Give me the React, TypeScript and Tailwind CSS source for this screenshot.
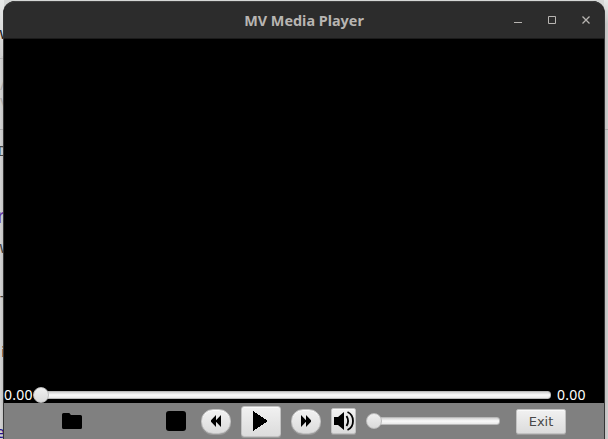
import React from "react";

const metal = "bg-gradient-to-b from-[#f1f1f1] to-[#dcdcdc] border border-[#c2c2c2] shadow-[inset_0_1px_0_#fafafa,0_1px_0_#9a9a9a]";

function Peek({ top, right, className, children }: { top: number; right: number; className: string; children: React.ReactNode }) {
  return (
    <span className={`absolute whitespace-nowrap leading-none ${className}`} style={{ top, right }}>
      {children}
    </span>
  );
}

function Backdrop() {
  return (
    <>
      <div className="absolute left-0 top-0 h-full w-1 bg-gradient-to-r from-[#d4d4d4] to-[#bdbdbd]">
        <div className="h-14 bg-gradient-to-b from-[#e8eae9] to-[#cfcfcf]" />
        <div className="mt-[2px] h-px bg-[#b5b5b5]" />
        <Peek top={25} right={-8} className="text-[16px] text-[#222]">w</Peek>
        <Peek top={76} right={-2} className="text-[16px] text-[#aaa]">/</Peek>
        <Peek top={96} right={-2} className="text-[16px] text-[#aaa]">\</Peek>
        <div className="absolute top-[129px] h-px w-full bg-[#aaa]" />
        <Peek top={144} right={-4} className="text-[14px] text-[#444]">D</Peek>
        <Peek top={207} right={-1} className="text-[19px] text-[#6536a3]">r</Peek>
        <Peek top={239} right={-8} className="text-[16px] text-[#444]">w</Peek>
        <Peek top={294} right={-4} className="text-[14px] text-[#444]">T</Peek>
        <Peek top={344} right={-1} className="text-[15px] text-[#222]">i</Peek>
        <Peek top={423} right={-1} className="text-[17px] text-[#27128c]">e</Peek>
      </div>
      <div className="absolute right-0 top-0 h-full w-1 bg-gradient-to-r from-[#bdbdbd] to-[#cdcdcd]">
        <div className="h-6 bg-gradient-to-b from-[#e8eae9] to-transparent" />
        <div className="mt-[105px] h-px bg-[#ababab]" />
      </div>
    </>
  );
}

function Thumb({ className }: { className: string }) {
  return <div className={`relative z-10 shrink-0 rounded-full border border-[#bcbcbc] bg-gradient-to-b from-[#efefef] to-[#dadada] ${className}`} />;
}

function Track({ className }: { className: string }) {
  return <div className={`h-2 rounded-[3px] border border-[#b9b9b9] bg-gradient-to-b from-[#d2d2d2] via-[#fafafa] to-[#e8e8e8] ${className}`} />;
}

function TitleBar() {
  return (
    <div className="flex h-[38px] shrink-0 items-center rounded-t-[11px] border-b border-[#1b1b1b] border-t border-t-[#414141] bg-[#2c2c2c] text-[#b8b5b2]">
      <div className="w-[94px]" />
      <h1 className="flex-1 pt-[2px] text-center text-[14.4px] font-bold leading-none">MV Media Player</h1>
      <div className="flex w-[94px] items-center gap-[26px] pl-1">
        <svg className="size-2 shrink-0" viewBox="0 0 8 8"><path d="M0 6.5h8" stroke="currentColor" /></svg>
        <svg className="size-2 shrink-0" viewBox="0 0 8 8"><path d="M.5.5h7v7h-7z" fill="none" stroke="currentColor" /></svg>
        <svg className="size-2 shrink-0" viewBox="0 0 8 8"><path d="m.5.5 7 7m0-7-7 7" stroke="currentColor" strokeWidth="1.3" /></svg>
      </div>
    </div>
  );
}

function Toolbar() {
  return (
    <div className="flex h-9 shrink-0 items-center bg-[#808080]">
      <svg className="ml-[58px] h-4 w-5 shrink-0" viewBox="0 0 20 16">
        <path d="M1.5 0h5.8l1.6 2h9.6Q20 2 20 3.5v11q0 1.5-1.5 1.5h-17Q0 16 0 14.5v-13Q0 0 1.5 0Z" />
      </svg>
      <button aria-label="Stop" className="ml-[84px] size-5 shrink-0 rounded-[3px] bg-black" />
      <button aria-label="Rewind" className={`ml-[15px] flex h-[25px] w-[30px] shrink-0 items-center justify-center rounded-[12px] ${metal}`}>
        <svg className="h-3 w-[10px]" viewBox="0 0 10 12">
          <path d="M5 0v12L0 6.8V5.2ZM10 0v12L5 6.8V5.2Z" />
        </svg>
      </button>
      <button aria-label="Play" className={`ml-[10px] flex h-[31px] w-10 shrink-0 items-center rounded-[3px] pl-[11px] ${metal}`}>
        <svg className="h-5 w-[15px]" viewBox="0 0 15 20" shapeRendering="crispEdges"><path d="M0 0 15 10 0 20Z" /></svg>
      </button>
      <button aria-label="Fast forward" className={`ml-[10px] flex h-[25px] w-[30px] shrink-0 items-center justify-center rounded-[12px] ${metal}`}>
        <svg className="h-3 w-[10px]" viewBox="0 0 10 12">
          <path d="M0 0v12l5-5.2V5.2ZM5 0v12l5-5.2V5.2Z" />
        </svg>
      </button>
      <button aria-label="Volume" className={`ml-[10px] flex h-[26px] w-[25px] shrink-0 items-center justify-center rounded-[2px] ${metal}`}>
        <svg className="h-5 w-5" viewBox="0 0 20 20">
          <path d="M0 6h4l6-5v18l-6-5H0Z" />
          <path d="M12.5 5q3.2 5 0 10M13.5 1q5.5 2.5 5.5 9t-5.5 9" fill="none" stroke="black" strokeWidth="1.8" />
        </svg>
      </button>
      <div className="ml-[10px] flex w-[134px] shrink-0 items-center">
        <Thumb className="size-4" />
        <Track className="-ml-2 flex-1" />
      </div>
      <button className={`ml-4 h-[25px] w-[50px] shrink-0 rounded-[2px] text-center font-['DejaVu_Sans',sans-serif] text-[13px] leading-[23px] text-[#484848] ${metal}`}>Exit</button>
    </div>
  );
}

export default function App() {
  return (
    <div className="relative h-[439px] w-[608px] overflow-hidden bg-[#d5d7d6] font-['Noto_Sans',sans-serif]">
      <Backdrop />
      <main className="relative ml-[3px] mt-px flex h-[438px] w-[602px] flex-col overflow-hidden rounded-t-[12px] border-x border-[#353535] bg-black">
        <TitleBar />
        <div className="flex-1" />
        <div className="flex h-4 items-center text-[14px] leading-4 tracking-[0.25px] text-white">
          <span className="w-[29px]">0.00</span>
          <Thumb className="size-4" />
          <Track className="-ml-2 w-[510px]" />
          <span className="ml-[6px]">0.00</span>
        </div>
        <Toolbar />
      </main>
    </div>
  );
}
